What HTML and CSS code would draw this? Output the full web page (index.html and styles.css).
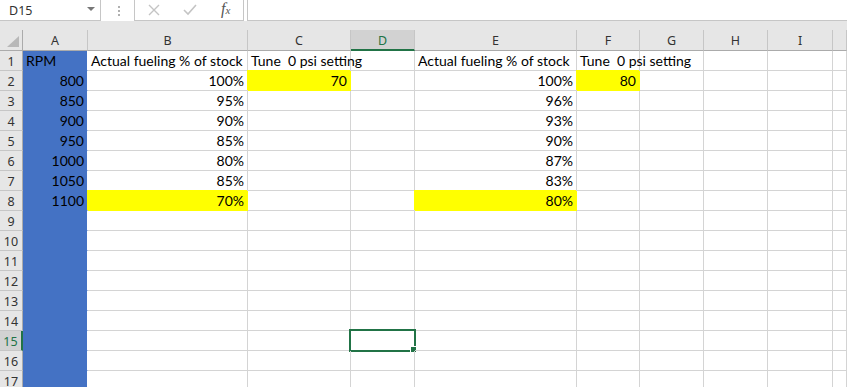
FILE: index.html
```html
<!DOCTYPE html>
<html lang="en">
<head>
  <meta charset="UTF-8" />
  <title>Book1 - Excel</title>
  <link rel="stylesheet" href="styles.css">
</head>
<body>

<div class="formula-bar">
  <div class="name-box">
    <span>D15</span>
    <span class="caret"></span>
  </div>
  <div class="grip">
    <span></span><span></span><span></span>
  </div>
  <div class="fx-buttons">
    <svg class="btn-icon" width="12" height="12" viewBox="0 0 12 12">
      <path d="M1 1 L11 11 M11 1 L1 11" stroke="#c4c4c4" stroke-width="1.4" fill="none"/>
    </svg>
    <svg class="btn-icon" width="14" height="12" viewBox="0 0 14 12">
      <path d="M1 6 L5 10 L13 1" stroke="#c4c4c4" stroke-width="1.6" fill="none"/>
    </svg>
    <span class="fx"><i>f</i><small>x</small></span>
  </div>
  <div class="formula-input"></div>
</div>

<div class="strip"></div>

<div class="sheet" id="sheet"></div>

<script>
  var cols = ['A', 'B', 'C', 'D', 'E', 'F', 'G', 'H', 'I', ''];
  var data = {
    1: { A: 'RPM', B: 'Actual fueling % of stock', C: 'Tune  0 psi setting', E: 'Actual fueling % of stock', F: 'Tune  0 psi setting' },
    2: { A: '800', B: '100%', C: '70', E: '100%', F: '80' },
    3: { A: '850', B: '95%', E: '96%' },
    4: { A: '900', B: '90%', E: '93%' },
    5: { A: '950', B: '85%', E: '90%' },
    6: { A: '1000', B: '80%', E: '87%' },
    7: { A: '1050', B: '85%', E: '83%' },
    8: { A: '1100', B: '70%', E: '80%' }
  };
  var yellow = ['C2', 'F2', 'B8', 'E8'];
  var active = 'D15';
  var sheet = document.getElementById('sheet');

  function add(cls, text) {
    var el = document.createElement('div');
    el.className = cls;
    if (text) el.textContent = text;
    sheet.appendChild(el);
    return el;
  }

  // column headers
  add('hd corner');
  cols.forEach(function (c) {
    add('hd col-head' + (c === active[0] ? ' sel' : ''), c);
  });

  // rows
  for (var r = 1; r <= 17; r++) {
    add('hd row-head' + (r === 15 ? ' sel' : ''), String(r));
    cols.forEach(function (c) {
      var ref = c + r;
      var val = (data[r] && data[r][c]) || '';
      var cls = 'cell';
      if (c === 'A') cls += ' blue';
      if (yellow.indexOf(ref) > -1) cls += ' yellow';
      if (val && /^[\d.]+%?$/.test(val)) cls += ' num';
      var el = add(cls, val);
      if (ref === active) {
        var box = document.createElement('div');
        box.className = 'selection';
        box.innerHTML = '<span class="handle"></span>';
        el.appendChild(box);
      }
    });
  }
</script>

</body>
</html>
```

FILE: styles.css
```css
body {
  margin: 0;
  background: #fff;
  font-family: Lato, "Liberation Sans", sans-serif;
  overflow: hidden;
}

/* formula bar */
.formula-bar {
  display: flex;
  height: 21px;
  background: #fff;
}
.name-box {
  width: 101px;
  box-sizing: border-box;
  border-right: 1px solid #c6c6c6;
  border-bottom: 1px solid #c6c6c6;
  display: flex;
  align-items: center;
  justify-content: space-between;
  padding: 0 5px 0 9px;
  font-family: "Noto Sans", sans-serif;
  font-size: 12.5px;
  color: #333;
}
.caret {
  width: 0;
  height: 0;
  border-left: 4px solid transparent;
  border-right: 4px solid transparent;
  border-top: 4px solid #777;
  margin-top: -2px;
}
.grip {
  width: 33px;
  display: flex;
  flex-direction: column;
  align-items: center;
  justify-content: center;
  gap: 2px;
  padding-left: 2px;
  box-sizing: border-box;
}
.grip span {
  width: 2px;
  height: 2px;
  background: #b0b0b0;
}
.fx-buttons {
  width: 110px;
  box-sizing: border-box;
  border: 1px solid #c6c6c6;
  border-top: none;
  display: flex;
  align-items: center;
  padding-left: 13px;
  gap: 23px;
}
.fx {
  font-family: "Liberation Serif", serif;
  font-size: 16px;
  color: #555;
  margin-left: 1px;
  margin-top: -2px;
}
.fx small {
  font-style: italic;
  font-size: 11px;
}
.formula-input {
  flex: 1;
  margin-left: 3px;
  border-left: 1px solid #c6c6c6;
  border-bottom: 1px solid #c6c6c6;
}
.strip {
  height: 9px;
  background: #e6e6e6;
}

/* grid */
.sheet {
  display: grid;
  grid-template-columns: 23px 65px 160px 103px 64px 162px 63px 64px 64px 65px 1fr;
  grid-template-rows: 21px;
  grid-auto-rows: 20px;
}
.hd {
  background: #e6e6e6;
  box-sizing: border-box;
  border-right: 1px solid #c6c6c6;
  border-bottom: 1px solid #c6c6c6;
  font-family: "Noto Sans", sans-serif;
  font-size: 12.5px;
  color: #333;
  display: flex;
  align-items: center;
  justify-content: center;
}
.col-head {
  border-bottom-color: #ababab;
  padding-top: 1px;
}
.row-head {
  border-right-color: #ababab;
  padding-top: 1px;
}
.corner {
  position: relative;
  border-bottom-color: #ababab;
  border-right-color: #ababab;
}
.corner::after {
  content: "";
  position: absolute;
  right: 3px;
  bottom: 3px;
  border-left: 12px solid transparent;
  border-bottom: 11px solid #b8b8b8;
}
.hd.sel {
  background: #d2d2d2;
  color: #217346;
}
.col-head.sel {
  border-bottom: 2px solid #217346;
}
.row-head.sel {
  border-right: 2px solid #217346;
}

.cell {
  position: relative;
  box-sizing: border-box;
  border-right: 1px solid #d4d4d4;
  border-bottom: 1px solid #d4d4d4;
  font-size: 14px;
  line-height: 16px;
  color: #000;
  white-space: pre;
  padding: 0 3px 1px 3px;
  display: flex;
  align-items: flex-end;
}
.cell.num {
  justify-content: flex-end;
}
.cell.blue {
  background: #4472c4;
  border-bottom-color: #4472c4;
  border-right-color: #fff;
}
.cell.yellow {
  background: #ffff00;
  border-color: #ffff00;
  box-shadow: -1px -1px 0 #ffff00;
}
.selection {
  position: absolute;
  left: -2px;
  top: -2px;
  width: 67px;
  height: 23px;
  box-sizing: border-box;
  border: 2px solid #217346;
}
.handle {
  position: absolute;
  right: -3px;
  bottom: -3px;
  width: 5px;
  height: 5px;
  background: #217346;
  border: 1px solid #fff;
}
```
